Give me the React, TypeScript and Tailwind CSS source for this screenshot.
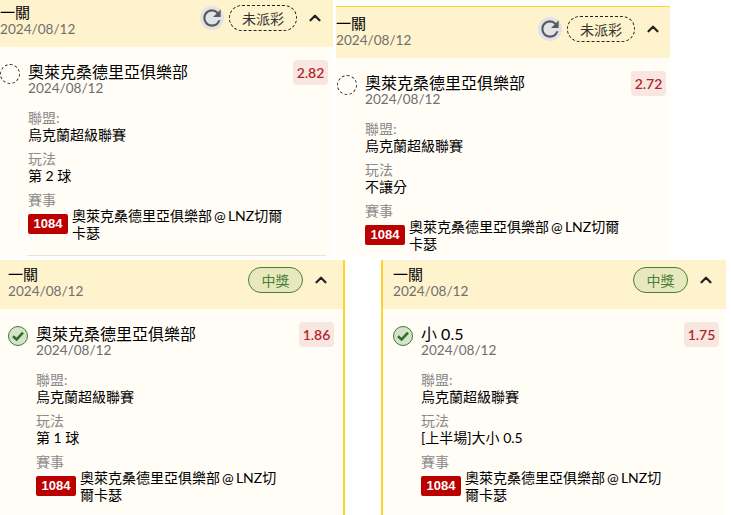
import { ChevronUp } from 'lucide-react';
import { MdRefresh } from 'react-icons/md';

type Bet = {
  title: string;
  odds: string;
  market: string;
  won: boolean;
  shell: string;
  header: string;
  body: string;
  divider?: boolean;
  matchWidth: string;
};

const matchName = '奧萊克桑德里亞俱樂部 @ LNZ切爾卡瑟';

const bets: Bet[] = [
  {
    title: '奧萊克桑德里亞俱樂部',
    odds: '2.82',
    market: '第 2 球',
    won: false,
    shell: 'left-0 top-0 w-[333px] h-[256px]',
    header: 'h-[47px] pt-[4px] pr-[9px]',
    body: 'pl-0 pr-[5px]',
    matchWidth: 'w-[212px]',
    divider: true,
  },
  {
    title: '奧萊克桑德里亞俱樂部',
    odds: '2.72',
    market: '不讓分',
    won: false,
    shell: 'left-[336px] top-[6px] w-[334px] h-[250px] border-t border-[#ffd42a]',
    header: 'h-[51px] pt-[8px] pr-[8px]',
    body: 'pl-[1px] pr-[4px]',
    matchWidth: 'w-[212px]',
  },
  {
    title: '奧萊克桑德里亞俱樂部',
    odds: '1.86',
    market: '第 1 球',
    won: true,
    shell: 'left-0 top-[260px] w-[345px] h-[255px] border-r-2 border-[#ffd42a]',
    header: 'h-[49px] pt-[6px] pl-[8px] pr-[13px]',
    body: 'pl-[8px] pr-[9px]',
    matchWidth: 'w-[200px]',
  },
  {
    title: '小 0.5',
    odds: '1.75',
    market: '[上半場]大小 0.5',
    won: true,
    shell: 'left-[381px] top-[260px] w-[345px] h-[255px] border-l-2 border-[#ffd42a]',
    header: 'h-[49px] pt-[6px] pl-[10px] pr-[11px]',
    body: 'pl-[10px] pr-[7px]',
    matchWidth: 'w-[200px]',
  },
];

function StatusDot({ won }: { won: boolean }) {
  if (!won) {
    return <div className="h-5 w-5 shrink-0 rounded-full border border-dashed border-[#222]" />;
  }
  return (
    <div className="flex h-5 w-5 shrink-0 items-center justify-center rounded-full border border-[#3f7a35] bg-[#d5e2cc]">
      <svg viewBox="0 0 14 14" className="h-[14px] w-[14px]" fill="none" stroke="#2f7028" strokeWidth="2.6">
        <path d="M2 7.2 5.6 10.4 12 3.6" />
      </svg>
    </div>
  );
}

function Field({ label, value }: { label: string; value: string }) {
  return (
    <div className="mb-[6px]">
      <div className="text-[14px] leading-[19px] text-[#8a8a8a]">{label}</div>
      <div className="text-[14px] leading-[16px] text-black">{value}</div>
    </div>
  );
}

function BetCard({ bet }: { bet: Bet }) {
  return (
    <section className={`absolute flex flex-col overflow-hidden bg-[#fffdf6] ${bet.shell}`}>
      <header className={`flex shrink-0 items-start justify-between bg-[#fff3cd] ${bet.header}`}>
        <div>
          <div className="text-[15px] leading-[17px] text-black">一關</div>
          <div className="text-[13.6px] leading-[17px] text-[#6f6f6f]">2024/08/12</div>
        </div>
        <div className="mt-px flex items-center">
          {!bet.won && (
            <div className="mr-[5px] flex h-6 w-6 items-center justify-center rounded-full bg-[#e2e3e6]">
              <MdRefresh size={26} color="#5a5a5a" className="shrink-0" />
            </div>
          )}
          {bet.won ? (
            <div className="flex h-[26px] w-[55px] items-center justify-center rounded-full border border-[#4a7f3a] bg-[#e7e8bd] text-[14px] text-[#4a7f3a]">
              中獎
            </div>
          ) : (
            <div className="flex h-[26px] w-[68px] items-center justify-center rounded-full border border-dashed border-[#222] text-[14px] text-[#333]">
              未派彩
            </div>
          )}
          <ChevronUp size={18} color="#222" strokeWidth={3} className="ml-[9px]" />
        </div>
      </header>
      <div className={`flex flex-1 flex-col pt-[13px] ${bet.body}`}>
        <div className="flex items-start">
          <div className="mt-[4px]">
            <StatusDot won={bet.won} />
          </div>
          <div className="ml-2 min-w-0 flex-1 pt-[3px]">
            <div className="text-[16px] leading-[17px] text-black">{bet.title}</div>
            <div className="text-[13.6px] leading-[17px] text-[#6f6f6f]">2024/08/12</div>
          </div>
          <div className="flex h-[25px] w-[35px] items-center justify-center rounded-[4px] bg-[#f8e6e1] text-[14px] font-semibold text-[#b3262e]">
            {bet.odds}
          </div>
        </div>
        <div className="ml-7 mt-[11px]">
          <Field label="聯盟:" value="烏克蘭超級聯賽" />
          <Field label="玩法" value={bet.market} />
          <div className="text-[14px] leading-[19px] text-[#8a8a8a]">賽事</div>
          <div className="-mt-[2px] flex items-start">
            <div className="mt-[7px] flex h-5 w-10 shrink-0 items-center justify-center rounded-[2px] bg-[#bb0000] font-['Liberation_Sans',sans-serif] text-[13px] font-bold text-white">
              1084
            </div>
            <div className={`ml-1 text-[14px] leading-[17px] text-black [word-spacing:-1.5px] ${bet.matchWidth}`}>
              {matchName}
            </div>
          </div>
        </div>
        {bet.divider && <div className="ml-[27px] mr-[2px] mt-auto border-b border-[#e8e6dc]" />}
      </div>
    </section>
  );
}

export default function App() {
  return (
    <div className="relative h-[515px] w-[731px] overflow-hidden bg-white font-['Lato','Noto_Sans_CJK_TC',sans-serif]">
      {bets.map((bet) => (
        <BetCard key={bet.shell} bet={bet} />
      ))}
    </div>
  );
}
